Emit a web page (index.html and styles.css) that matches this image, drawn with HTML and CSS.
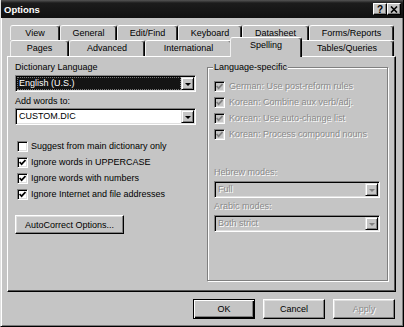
FILE: index.html
```html
<!DOCTYPE html>
<html lang="en">
<head>
    <meta charset="UTF-8">
    <title>Options</title>
    <link rel="stylesheet" href="styles.css">
</head>
<body>
    <div class="window">
        <div class="titlebar">
            <span class="title">Options</span>
            <div class="title_buttons">
                <span class="tbtn">?</span>
                <span class="tbtn">
                    <svg width="8" height="7" viewBox="0 0 8 7"><path d="M1 0.5 L7 6.5 M7 0.5 L1 6.5" stroke="#000" stroke-width="1.6" fill="none"/></svg>
                </span>
            </div>
        </div>

        <div class="tabs">
            <div class="tab_row back">
                <div class="tab t_view">View</div>
                <div class="tab t_general">General</div>
                <div class="tab t_edit">Edit/Find</div>
                <div class="tab t_keyboard">Keyboard</div>
                <div class="tab t_datasheet">Datasheet</div>
                <div class="tab t_forms">Forms/Reports</div>
            </div>
            <div class="tab_row front">
                <div class="tab t_pages">Pages</div>
                <div class="tab t_advanced">Advanced</div>
                <div class="tab t_international">International</div>
                <div class="tab t_spelling active">Spelling</div>
                <div class="tab t_tables">Tables/Queries</div>
            </div>
        </div>

        <div class="panel">
            <div class="left_col">
                <div class="label">Dictionary Language</div>
                <div class="combo first">
                    <div class="combo_value selected"><span>English (U.S.)</span></div>
                    <div class="combo_arrow"><i></i></div>
                </div>
                <div class="label label_gap">Add words to:</div>
                <div class="combo">
                    <div class="combo_value">CUSTOM.DIC</div>
                    <div class="combo_arrow"><i></i></div>
                </div>

                <div class="check_list">
                    <div class="check_row">
                        <span class="box"></span>
                        <span>Suggest from main dictionary only</span>
                    </div>
                    <div class="check_row">
                        <span class="box"><svg width="7" height="7" viewBox="0 0 7 7"><path d="M0.6 3 L2.6 5.2 L6.5 1" stroke="#000" stroke-width="1.7" fill="none"/></svg></span>
                        <span>Ignore words in UPPERCASE</span>
                    </div>
                    <div class="check_row">
                        <span class="box"><svg width="7" height="7" viewBox="0 0 7 7"><path d="M0.6 3 L2.6 5.2 L6.5 1" stroke="#000" stroke-width="1.7" fill="none"/></svg></span>
                        <span>Ignore words with numbers</span>
                    </div>
                    <div class="check_row">
                        <span class="box"><svg width="7" height="7" viewBox="0 0 7 7"><path d="M0.6 3 L2.6 5.2 L6.5 1" stroke="#000" stroke-width="1.7" fill="none"/></svg></span>
                        <span>Ignore Internet and file addresses</span>
                    </div>
                </div>

                <div class="btn autocorrect">AutoCorrect Options...</div>
            </div>

            <div class="group">
                <div class="group_title">Language-specific</div>
                <div class="check_list right disabled">
                    <div class="check_row">
                        <span class="box"><svg width="7" height="7" viewBox="0 0 7 7"><path d="M0.6 3 L2.6 5.2 L6.5 1" stroke="#808080" stroke-width="1.7" fill="none"/></svg></span>
                        <span>German: Use post-reform rules</span>
                    </div>
                    <div class="check_row">
                        <span class="box"><svg width="7" height="7" viewBox="0 0 7 7"><path d="M0.6 3 L2.6 5.2 L6.5 1" stroke="#808080" stroke-width="1.7" fill="none"/></svg></span>
                        <span>Korean: Combine aux verb/adj.</span>
                    </div>
                    <div class="check_row">
                        <span class="box"><svg width="7" height="7" viewBox="0 0 7 7"><path d="M0.6 3 L2.6 5.2 L6.5 1" stroke="#808080" stroke-width="1.7" fill="none"/></svg></span>
                        <span>Korean: Use auto-change list</span>
                    </div>
                    <div class="check_row">
                        <span class="box"><svg width="7" height="7" viewBox="0 0 7 7"><path d="M0.6 3 L2.6 5.2 L6.5 1" stroke="#808080" stroke-width="1.7" fill="none"/></svg></span>
                        <span>Korean: Process compound nouns</span>
                    </div>
                </div>

                <div class="label disabled hebrew">Hebrew modes:</div>
                <div class="combo wide disabled">
                    <div class="combo_value">Full</div>
                    <div class="combo_arrow"><i></i></div>
                </div>
                <div class="label disabled small_gap">Arabic modes:</div>
                <div class="combo wide disabled">
                    <div class="combo_value">Both strict</div>
                    <div class="combo_arrow"><i></i></div>
                </div>
            </div>
        </div>

        <div class="actions">
            <div class="btn default">OK</div>
            <div class="btn">Cancel</div>
            <div class="btn disabled">Apply</div>
        </div>
    </div>
</body>
</html>
```

FILE: styles.css
```css
* {
    box-sizing: border-box;
}

body {
    margin: 0;
    font-family: "Liberation Sans", Arial, sans-serif;
    font-size: 9px;
    color: #000;
    background: #c5c5c5;
}

.window {
    width: 404px;
    height: 327px;
    background: #c5c5c5;
    border-left: 1px solid #e0e0e0;
    border-right: 1px solid #000;
    border-bottom: 1px solid #000;
    box-shadow: inset 1px 0 #fff, inset -1px -1px #7a7a7a;
    display: flex;
    flex-direction: column;
}

/* title bar */
.titlebar {
    height: 18px;
    background: linear-gradient(#555 0, #1c1c1c 3px, #101010);
    display: flex;
    align-items: center;
    justify-content: space-between;
    padding: 0 2px 0 3px;
}

.title {
    color: #fff;
    font-weight: bold;
    font-size: 9.5px;
}

.title_buttons {
    display: flex;
}

.tbtn {
    width: 14px;
    height: 12px;
    background: #c5c5c5;
    border: 1px solid;
    border-color: #fff #000 #000 #fff;
    box-shadow: inset -1px -1px #808080;
    display: flex;
    align-items: center;
    justify-content: center;
    font-weight: bold;
    font-size: 10px;
}

/* tabs */
.tabs {
    margin: 7px 0 0 9px;
    width: 384px;
}

.tab_row {
    display: flex;
}

.back {
    height: 15px;
}

.front {
    height: 16px;
    align-items: flex-end;
}

.tab {
    height: 100%;
    border: 1px solid;
    border-color: #fff #000 transparent #f0f0f0;
    border-bottom: none;
    border-radius: 3px 3px 0 0;
    box-shadow: inset -1px 0 #333;
    background: #c5c5c5;
    display: flex;
    justify-content: center;
    padding-top: 2px;
}

.tab.active {
    height: 20px;
    margin: 0 -2px;
    position: relative;
    top: 1px;
    z-index: 1;
    padding-top: 2px;
}

.t_view { width: 50px; }
.t_general { width: 57px; }
.t_edit { width: 61px; }
.t_keyboard { width: 64px; }
.t_datasheet { width: 67px; }
.t_forms { width: 85px; }
.t_pages { width: 59px; }
.t_advanced { width: 76px; }
.t_international { width: 87px; }
.t_spelling { width: 72px; }
.t_tables { width: 94px; }

/* panel */
.panel {
    margin-left: 6px;
    width: 389px;
    height: 236px;
    border: 1px solid;
    border-color: #fff #000 #000 #fff;
    box-shadow: inset -1px -1px #555;
    padding: 4px 0 0 7px;
    display: flex;
    align-items: flex-start;
}

.left_col {
    width: 181px;
    display: flex;
    flex-direction: column;
    align-items: flex-start;
}

.label {
    line-height: 13px;
    height: 13px;
    white-space: nowrap;
}

.label_gap {
    margin-top: 3px;
}

.combo {
    width: 181px;
    height: 17px;
    display: flex;
    border: 1px solid;
    border-color: #808080 #fff #fff #808080;
    box-shadow: inset 1px 1px #000, inset -1px -1px #dfdfdf;
    padding: 1px;
}

.combo.first {
    margin-top: 1px;
}

.combo_value {
    flex: 1;
    background: #fff;
    line-height: 13px;
    padding-left: 2px;
    white-space: nowrap;
}

.combo_value.selected {
    background: #141414;
    color: #fff;
    padding: 1px;
}

.combo_value.selected span {
    display: block;
    height: 11px;
    line-height: 11px;
    padding-left: 1px;
    outline: 1px dotted #777;
}

.combo_arrow {
    width: 13px;
    height: 13px;
    background: #c5c5c5;
    border: 1px solid;
    border-color: #dfdfdf #000 #000 #dfdfdf;
    box-shadow: inset 1px 1px #fff, inset -1px -1px #808080;
    display: flex;
    align-items: center;
    justify-content: center;
}

.combo_arrow i {
    width: 0;
    height: 0;
    border-left: 3px solid transparent;
    border-right: 3px solid transparent;
    border-top: 3px solid #000;
    margin-top: 1px;
}

.combo.disabled .combo_value {
    background: #c5c5c5;
}

.combo.disabled .combo_arrow i {
    border-top-color: #808080;
}

.check_list {
    margin-top: 13px;
}

.check_list.right {
    margin-top: 4px;
}

.check_row {
    height: 16px;
    display: flex;
    align-items: center;
    white-space: nowrap;
}

.box {
    width: 11px;
    height: 11px;
    margin: 0 3px 0 2px;
    background: #fff;
    border: 1px solid;
    border-color: #808080 #fff #fff #808080;
    box-shadow: inset 1px 1px #000, inset -1px -1px #dfdfdf;
    display: flex;
    align-items: center;
    justify-content: center;
}

.right .box {
    margin: 0 4px 0 0;
}

.check_list.disabled .box {
    background: #c5c5c5;
}

.disabled {
    color: #8a8a8a;
    text-shadow: 1px 1px #fff;
}

.btn {
    height: 20px;
    width: 62px;
    border: 1px solid;
    border-color: #fff #000 #000 #fff;
    box-shadow: inset -1px -1px #808080, inset 1px 1px #dfdfdf;
    display: flex;
    align-items: center;
    justify-content: center;
    white-space: nowrap;
}

.btn.default {
    border-color: #000;
    box-shadow: inset 1px 1px #fff, inset -1px -1px #000, inset -2px -2px #808080;
}

.autocorrect {
    margin-top: 13px;
    width: 109px;
    height: 19px;
}

/* group box on the right */
.group {
    margin: 6px 0 0 11px;
    width: 181px;
    height: 214px;
    border: 1px solid #808080;
    box-shadow: inset 1px 1px #fff, 1px 1px #fff;
    padding-left: 6px;
    display: flex;
    flex-direction: column;
    align-items: flex-start;
}

.group_title {
    margin: -7px 0 0 -1px;
    padding: 0 1px;
    line-height: 13px;
    background: #c5c5c5;
}

.combo.wide {
    width: 166px;
    margin-top: 2px;
}

.hebrew {
    margin-top: 24px;
}

.small_gap {
    margin-top: 2px;
}

/* bottom buttons */
.actions {
    display: flex;
    justify-content: flex-end;
    gap: 8px;
    margin-top: 7px;
    padding-right: 8px;
}
```
